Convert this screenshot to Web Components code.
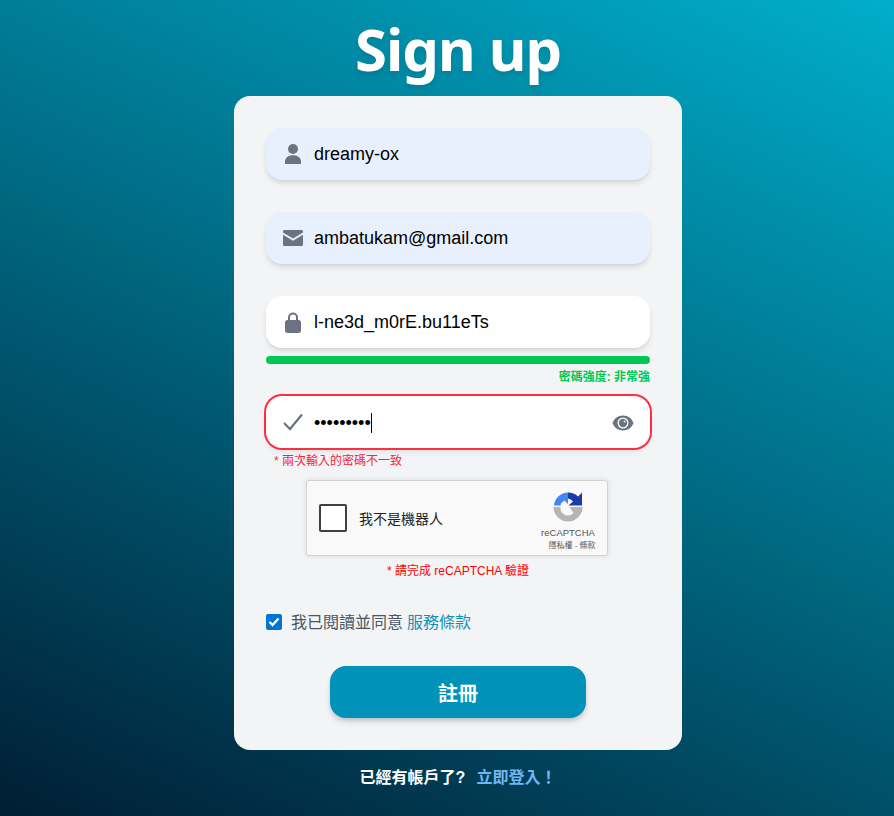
<!DOCTYPE html>
<html>
<head>
<meta charset="utf-8">
<title>Sign up</title>
<style>
  html, body { margin: 0; height: 100%; }
  body {
    height: 816px;
    overflow: hidden;
    background: linear-gradient(25deg, #001e34, #00aecb);
    font-family: "Liberation Sans", "Noto Sans CJK TC", sans-serif;
  }
</style>
</head>
<body>
<signup-page></signup-page>

<script>
const ICONS = {
  user: '<svg width="18" height="20" viewBox="0 0 18 20"><circle cx="9" cy="5" r="5" fill="#6b7280"/><path d="M1 20v-2.500C1 13.500 4.500 11.200 9 11.200s8 2.300 8 6.300V20z" fill="#6b7280"/></svg>',
  mail: '<svg width="20" height="16" viewBox="0 0 20 16"><path d="M1.500 0h17C19.400 0 20 .6 20 1.500v.9l-10 6-10-6v-.9C0 .6.600 0 1.500 0zM0 4.700l10 6 10-6v9.800c0 .9-.6 1.500-1.500 1.500h-17C.6 16 0 15.400 0 14.500z" fill="#6b7280"/></svg>',
  lock: '<svg width="16" height="21" viewBox="0 0 16 21"><path d="M3 8V5.500a5 5 0 0 1 10 0V8h.5C15 8 16 9 16 10.500v8C16 20 15 21 13.500 21h-11C1 21 0 20 0 18.500v-8C0 9 1 8 2.500 8zm2 0h6V5.500a3 3 0 0 0-6 0z" fill="#6b7280"/></svg>',
  check: '<svg width="20" height="18" viewBox="0 0 20 18"><path d="M1 10l6 6L19 1.500" fill="none" stroke="#6b7280" stroke-width="2.200"/></svg>',
  eye: '<svg width="22" height="16" viewBox="0 0 22 16"><path fill-rule="evenodd" d="M11 .5C6 .5 2 3.500 .5 8 2 12.500 6 15.500 11 15.500S20 12.500 21.500 8C20 3.500 16 .5 11 .5zM11 13.500a5.500 5.500 0 1 1 0-11 5.500 5.500 0 0 1 0 11z" fill="#6b7280"/><circle cx="11" cy="8" r="4.200" fill="#6b7280"/><circle cx="12.600" cy="6.500" r=".9" fill="#fff"/></svg>'
};

class FormField extends HTMLElement {
  connectedCallback() {
    const shadow = this.attachShadow({ mode: "open" });
    const icon = ICONS[this.getAttribute("icon")] || "";
    const trailing = ICONS[this.getAttribute("trailing")] || "";
    shadow.innerHTML = `
      <style>
        :host {
          display: flex;
          flex: none;
          align-items: center;
          height: 52px;
          padding: 0 16px;
          box-sizing: border-box;
          border-radius: 16px;
          background: #fff;
          box-shadow: 0 4px 6px -1px rgba(0,0,0,.1), 0 2px 4px -2px rgba(0,0,0,.1);
          font: 18px "Liberation Sans", sans-serif;
          color: #000;
        }
        :host([autofill]) { background: #e8f0fe; }
        :host([invalid]) { box-shadow: 0 0 0 2px #ff2d42, 0 4px 6px -1px rgba(0,0,0,.1); }
        .icon { width: 22px; margin-right: 10px; display: flex; justify-content: center; flex: none; }
        .value { flex: 1; white-space: nowrap; }
        :host([invalid]) .value { padding-top: 2px; }
        .trail { display: flex; padding-top: 2px; }
      </style>
      <span class="icon">${icon}</span>
      <span class="value"><slot></slot></span>
      <span class="trail">${trailing}</span>
    `;
  }
}

class StrengthMeter extends HTMLElement {
  constructor() {
    super();
    const shadow = this.attachShadow({ mode: "open" });
    shadow.innerHTML = `
      <style>
        :host { display: block; flex: none; margin-top: 8px; }
        .bar { height: 8px; border-radius: 4px; background: #00c853; }
        .label {
          height: 22px;
          text-align: right;
          font: bold 12px/26px "Liberation Sans", "Noto Sans CJK TC", sans-serif;
          color: #00c853;
        }
      </style>
      <div class="bar"></div>
      <div class="label"><slot></slot></div>
    `;
  }
}

class FakeCaptcha extends HTMLElement {
  constructor() {
    super();
    const shadow = this.attachShadow({ mode: "open" });
    shadow.innerHTML = `
      <style>
        :host {
          display: flex;
          flex: none;
          align-items: center;
          box-sizing: border-box;
          width: 302px;
          height: 76px;
          background: #f9f9f9;
          border: 1px solid #d3d3d3;
          border-radius: 3px;
          box-shadow: 0 0 4px 1px rgba(0,0,0,.08);
          font-family: "Liberation Sans", "Noto Sans CJK TC", sans-serif;
          color: #222;
        }
        .box {
          box-sizing: border-box;
          width: 28px;
          height: 28px;
          margin-left: 12px;
          background: #fff;
          border: 2px solid #404040;
          border-radius: 2px;
          flex: none;
        }
        .txt { margin-left: 12px; font-size: 14px; flex: 1; }
        .brand {
          width: 70px;
          margin-right: 4px;
          align-self: stretch;
          box-sizing: border-box;
          padding-top: 11px;
          display: flex;
          flex-direction: column;
          align-items: center;
          color: #555;
        }
        .name { font-size: 9.500px; line-height: 12px; margin-top: 4px; }
        .links { font-size: 8px; line-height: 12px; margin: 1px -8px 0 0; white-space: nowrap; }
      </style>
      <span class="box"></span>
      <span class="txt"><slot></slot></span>
      <div class="brand">
        <svg width="30" height="31" viewBox="0 0 30 31">
          <path d="M15 .5A14.500 14.500 0 0 0 1 13.500H7.500A7.500 7.500 0 0 1 11.500 8.500L15 12z" fill="#4285f4"/>
          <path d="M15 .5C19 .5 22.500 2 25.200 4.500L29 .5V13.500H15.500L20 9.500A7.500 7.500 0 0 0 15 6.500z" fill="#1c3aa9"/>
          <path d="M.5 15H7.500A7.500 7.500 0 0 0 20.500 21L16.500 15H29.500A14.500 14.500 0 0 1 .5 15z" fill="#b5b5b5"/>
        </svg>
        <div class="name">reCAPTCHA</div>
        <div class="links">隱私權 - 條款</div>
      </div>
    `;
  }
}

class SignupPage extends HTMLElement {
  constructor() {
    super();
    const shadow = this.attachShadow({ mode: "open" });
    shadow.innerHTML = `
      <style>
        :host {
          display: flex;
          flex-direction: column;
          align-items: center;
          padding-left: 22px;
          font-family: "Liberation Sans", "Noto Sans CJK TC", sans-serif;
        }
        h1 {
          margin: 0;
          height: 96px;
          font: bold 58px/98px "Noto Sans", sans-serif;
          letter-spacing: -1px;
          color: #fff;
          text-shadow: 0 4px 6px rgba(0,0,0,.1);
        }
        .card {
          box-sizing: border-box;
          width: 448px;
          height: 654px;
          padding: 32px;
          border-radius: 16px;
          background: #f3f4f6;
          display: flex;
          flex-direction: column;
        }
        form-field + form-field { margin-top: 32px; }
        form-field.confirm { margin-top: 10px; }
        .err { flex: none; font-size: 12px; line-height: 16px; }
        .err.left { margin: 5px 0 0 8px; color: #f5243a; }
        .err.mid { margin-top: 7px; text-align: center; color: #f00; }
        fake-captcha { margin: 11px 0 0 40px; }
        .terms {
          display: flex;
          flex: none;
          align-items: center;
          margin-top: 31px;
          height: 24px;
          font-size: 16px;
          color: #4b5563;
        }
        .terms span:not(.tick), .terms a { padding-bottom: 3px; }
        .tick {
          width: 16px;
          height: 16px;
          margin-right: 9px;
          border-radius: 2px;
          background: #0075d5;
          display: flex;
          align-items: center;
          justify-content: center;
          flex: none;
        }
        .terms a { color: #0e92b4; margin-left: 4px; text-decoration: none; }
        button {
          display: block;
          flex: none;
          width: 256px;
          height: 52px;
          margin: 32px auto 0;
          border: 0;
          border-radius: 16px;
          background: #0092b8;
          color: #fff;
          font: bold 20px "Liberation Sans", "Noto Sans CJK TC", sans-serif;
          box-shadow: 0 4px 6px -1px rgba(0,0,0,.2), 0 2px 4px -2px rgba(0,0,0,.1);
        }
        .foot {
          margin-top: 18px;
          font-size: 16px;
          line-height: 20px;
          font-weight: bold;
          color: #fff;
        }
        .foot a { color: #6fb6f2; margin-left: 7px; text-decoration: none; }
        .caret { display: inline-block; width: 1px; height: 20px; background: #000; vertical-align: -4px; }
      </style>
      <h1>Sign up</h1>
      <div class="card">
        <form-field icon="user" autofill>dreamy-ox</form-field>
        <form-field icon="mail" autofill>ambatukam@gmail.com</form-field>
        <form-field icon="lock">l-ne3d_m0rE.bu11eTs</form-field>
        <strength-meter>密碼強度: 非常強</strength-meter>
        <form-field class="confirm" icon="check" trailing="eye" invalid>•••••••••<span class="caret"></span></form-field>
        <div class="err left">* 兩次輸入的密碼不一致</div>
        <fake-captcha>我不是機器人</fake-captcha>
        <div class="err mid">* 請完成 reCAPTCHA 驗證</div>
        <div class="terms">
          <span class="tick"><svg width="12" height="10" viewBox="0 0 12 10"><path d="M1.500 5l3 3 6-6.500" fill="none" stroke="#fff" stroke-width="2.400"/></svg></span>
          <span>我已閱讀並同意</span><a>服務條款</a>
        </div>
        <button>註冊</button>
      </div>
      <div class="foot">已經有帳戶了? <a>立即登入！</a></div>
    `;
  }
}

customElements.define("form-field", FormField);
customElements.define("strength-meter", StrengthMeter);
customElements.define("fake-captcha", FakeCaptcha);
customElements.define("signup-page", SignupPage);
</script>
</body>
</html>
